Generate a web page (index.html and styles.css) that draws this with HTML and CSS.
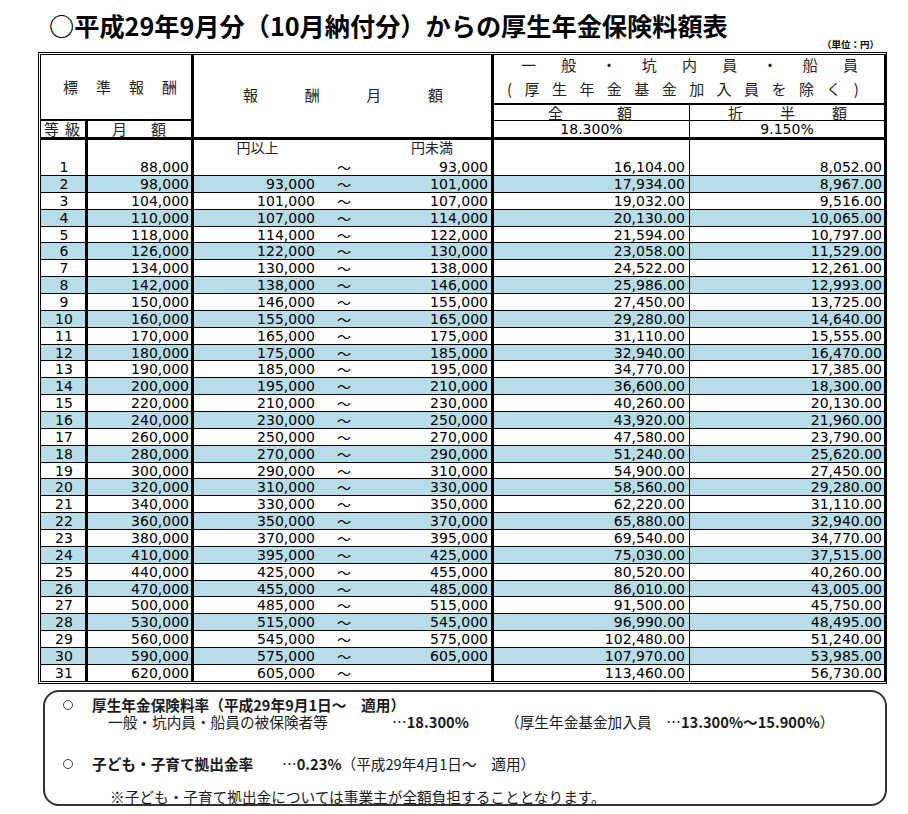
FILE: index.html
```html
<!DOCTYPE html>
<html lang="ja">
<head>
<meta charset="utf-8">
<title>厚生年金保険料額表</title>
<link rel="stylesheet" href="styles.css">
</head>
<body>
<div class="page">
  <h1 class="title">○平成29年9月分（10月納付分）からの厚生年金保険料額表</h1>
  <div class="unit">（単位：円）</div>
  <div class="table">
    <div class="head">
      <div class="hc h-std"><div class="spread sp-std"><span>標</span><span>準</span><span>報</span><span>酬</span></div></div>
      <div class="hc h-grade"><div class="spread sp-grade"><span>等</span><span>級</span></div></div>
      <div class="hc h-month"><div class="spread sp-month"><span>月</span><span>額</span></div></div>
      <div class="hc h-pay"><div class="spread sp-pay"><span>報</span><span>酬</span><span>月</span><span>額</span></div></div>
      <div class="h-gen">
        <div class="gen1"><div class="spread sp-gen1"><span>一</span><span>般</span><span>・</span><span>坑</span><span>内</span><span>員</span><span>・</span><span>船</span><span>員</span></div></div>
        <div class="gen2"><div class="spread sp-gen2"><span>(</span><span>厚</span><span>生</span><span>年</span><span>金</span><span>基</span><span>金</span><span>加</span><span>入</span><span>員</span><span>を</span><span>除</span><span>く</span><span>)</span></div></div>
      </div>
      <div class="hc h-full"><div class="spread sp-full"><span>全</span><span>額</span></div></div>
      <div class="hc h-half"><div class="spread sp-half"><span>折</span><span>半</span><span>額</span></div></div>
      <div class="hc h-rate1">18.300%</div>
      <div class="hc h-rate2">9.150%</div>
    </div>
    <div class="body">
      <div class="row first"><div class="c g">1</div><div class="c m">88,000</div><div class="c f"><span class="lbl">円以上</span><span></span></div><div class="c t">～</div><div class="c u"><span class="lbl">円未満</span><span>93,000</span></div><div class="c a">16,104.00</div><div class="c b">8,052.00</div></div>
      <div class="row blue"><div class="c g">2</div><div class="c m">98,000</div><div class="c f">93,000</div><div class="c t">～</div><div class="c u">101,000</div><div class="c a">17,934.00</div><div class="c b">8,967.00</div></div>
      <div class="row"><div class="c g">3</div><div class="c m">104,000</div><div class="c f">101,000</div><div class="c t">～</div><div class="c u">107,000</div><div class="c a">19,032.00</div><div class="c b">9,516.00</div></div>
      <div class="row blue"><div class="c g">4</div><div class="c m">110,000</div><div class="c f">107,000</div><div class="c t">～</div><div class="c u">114,000</div><div class="c a">20,130.00</div><div class="c b">10,065.00</div></div>
      <div class="row"><div class="c g">5</div><div class="c m">118,000</div><div class="c f">114,000</div><div class="c t">～</div><div class="c u">122,000</div><div class="c a">21,594.00</div><div class="c b">10,797.00</div></div>
      <div class="row blue"><div class="c g">6</div><div class="c m">126,000</div><div class="c f">122,000</div><div class="c t">～</div><div class="c u">130,000</div><div class="c a">23,058.00</div><div class="c b">11,529.00</div></div>
      <div class="row"><div class="c g">7</div><div class="c m">134,000</div><div class="c f">130,000</div><div class="c t">～</div><div class="c u">138,000</div><div class="c a">24,522.00</div><div class="c b">12,261.00</div></div>
      <div class="row blue"><div class="c g">8</div><div class="c m">142,000</div><div class="c f">138,000</div><div class="c t">～</div><div class="c u">146,000</div><div class="c a">25,986.00</div><div class="c b">12,993.00</div></div>
      <div class="row"><div class="c g">9</div><div class="c m">150,000</div><div class="c f">146,000</div><div class="c t">～</div><div class="c u">155,000</div><div class="c a">27,450.00</div><div class="c b">13,725.00</div></div>
      <div class="row blue"><div class="c g">10</div><div class="c m">160,000</div><div class="c f">155,000</div><div class="c t">～</div><div class="c u">165,000</div><div class="c a">29,280.00</div><div class="c b">14,640.00</div></div>
      <div class="row"><div class="c g">11</div><div class="c m">170,000</div><div class="c f">165,000</div><div class="c t">～</div><div class="c u">175,000</div><div class="c a">31,110.00</div><div class="c b">15,555.00</div></div>
      <div class="row blue"><div class="c g">12</div><div class="c m">180,000</div><div class="c f">175,000</div><div class="c t">～</div><div class="c u">185,000</div><div class="c a">32,940.00</div><div class="c b">16,470.00</div></div>
      <div class="row"><div class="c g">13</div><div class="c m">190,000</div><div class="c f">185,000</div><div class="c t">～</div><div class="c u">195,000</div><div class="c a">34,770.00</div><div class="c b">17,385.00</div></div>
      <div class="row blue"><div class="c g">14</div><div class="c m">200,000</div><div class="c f">195,000</div><div class="c t">～</div><div class="c u">210,000</div><div class="c a">36,600.00</div><div class="c b">18,300.00</div></div>
      <div class="row"><div class="c g">15</div><div class="c m">220,000</div><div class="c f">210,000</div><div class="c t">～</div><div class="c u">230,000</div><div class="c a">40,260.00</div><div class="c b">20,130.00</div></div>
      <div class="row blue"><div class="c g">16</div><div class="c m">240,000</div><div class="c f">230,000</div><div class="c t">～</div><div class="c u">250,000</div><div class="c a">43,920.00</div><div class="c b">21,960.00</div></div>
      <div class="row"><div class="c g">17</div><div class="c m">260,000</div><div class="c f">250,000</div><div class="c t">～</div><div class="c u">270,000</div><div class="c a">47,580.00</div><div class="c b">23,790.00</div></div>
      <div class="row blue"><div class="c g">18</div><div class="c m">280,000</div><div class="c f">270,000</div><div class="c t">～</div><div class="c u">290,000</div><div class="c a">51,240.00</div><div class="c b">25,620.00</div></div>
      <div class="row"><div class="c g">19</div><div class="c m">300,000</div><div class="c f">290,000</div><div class="c t">～</div><div class="c u">310,000</div><div class="c a">54,900.00</div><div class="c b">27,450.00</div></div>
      <div class="row blue"><div class="c g">20</div><div class="c m">320,000</div><div class="c f">310,000</div><div class="c t">～</div><div class="c u">330,000</div><div class="c a">58,560.00</div><div class="c b">29,280.00</div></div>
      <div class="row"><div class="c g">21</div><div class="c m">340,000</div><div class="c f">330,000</div><div class="c t">～</div><div class="c u">350,000</div><div class="c a">62,220.00</div><div class="c b">31,110.00</div></div>
      <div class="row blue"><div class="c g">22</div><div class="c m">360,000</div><div class="c f">350,000</div><div class="c t">～</div><div class="c u">370,000</div><div class="c a">65,880.00</div><div class="c b">32,940.00</div></div>
      <div class="row"><div class="c g">23</div><div class="c m">380,000</div><div class="c f">370,000</div><div class="c t">～</div><div class="c u">395,000</div><div class="c a">69,540.00</div><div class="c b">34,770.00</div></div>
      <div class="row blue"><div class="c g">24</div><div class="c m">410,000</div><div class="c f">395,000</div><div class="c t">～</div><div class="c u">425,000</div><div class="c a">75,030.00</div><div class="c b">37,515.00</div></div>
      <div class="row"><div class="c g">25</div><div class="c m">440,000</div><div class="c f">425,000</div><div class="c t">～</div><div class="c u">455,000</div><div class="c a">80,520.00</div><div class="c b">40,260.00</div></div>
      <div class="row blue"><div class="c g">26</div><div class="c m">470,000</div><div class="c f">455,000</div><div class="c t">～</div><div class="c u">485,000</div><div class="c a">86,010.00</div><div class="c b">43,005.00</div></div>
      <div class="row"><div class="c g">27</div><div class="c m">500,000</div><div class="c f">485,000</div><div class="c t">～</div><div class="c u">515,000</div><div class="c a">91,500.00</div><div class="c b">45,750.00</div></div>
      <div class="row blue"><div class="c g">28</div><div class="c m">530,000</div><div class="c f">515,000</div><div class="c t">～</div><div class="c u">545,000</div><div class="c a">96,990.00</div><div class="c b">48,495.00</div></div>
      <div class="row"><div class="c g">29</div><div class="c m">560,000</div><div class="c f">545,000</div><div class="c t">～</div><div class="c u">575,000</div><div class="c a">102,480.00</div><div class="c b">51,240.00</div></div>
      <div class="row blue"><div class="c g">30</div><div class="c m">590,000</div><div class="c f">575,000</div><div class="c t">～</div><div class="c u">605,000</div><div class="c a">107,970.00</div><div class="c b">53,985.00</div></div>
      <div class="row"><div class="c g">31</div><div class="c m">620,000</div><div class="c f">605,000</div><div class="c t">～</div><div class="c u"></div><div class="c a">113,460.00</div><div class="c b">56,730.00</div></div>
    </div>
  </div>
  <div class="note">
    <div class="nl nl1"><span class="circle"></span><b class="w-l1">厚生年金保険料率（平成29年9月1日～　適用）</b></div>
    <div class="nl nl2"><span class="w-a">一般・坑内員・船員の被保険者等</span><span class="w-b">…<b>18.300%</b></span><span>（厚生年金基金加入員　…<b>13.300%～15.900%</b>）</span></div>
    <div class="nl nl3"><span class="circle"></span><b class="w-c">子ども・子育て拠出金率</b><span>…<b>0.23%</b>（平成29年4月1日～　適用）</span></div>
    <div class="nl nl4"><span>※子ども・子育て拠出金については事業主が全額負担することとなります。</span></div>
  </div>
</div>
</body>
</html>
```

FILE: styles.css
```css
* {
  box-sizing: border-box;
  margin: 0;
  padding: 0;
}

body {
  margin: 0;
  background: #ffffff;
  color: #000000;
  font-family: "DejaVu Sans", "Noto Sans CJK JP", sans-serif;
}

.page {
  width: 849px;
  margin-left: 38px;
}

.title {
  font-family: "Noto Sans CJK JP", sans-serif;
  font-weight: 700;
  font-size: 25.2px;
  line-height: 30px;
  margin-top: 10px;
  margin-left: 11px;
  white-space: nowrap;
}

.unit {
  font-family: "Noto Sans CJK JP", sans-serif;
  font-weight: 700;
  font-size: 9.5px;
  line-height: 8px;
  height: 8px;
  text-align: right;
  padding-right: 8px;
  margin-bottom: 4px;
}

.table {
  border-top: 3px double #000;
  border-left: 3px double #000;
  border-bottom: 3px double #000;
  border-right: 3px solid #000;
}

/* ---------- header ---------- */
.head {
  display: grid;
  grid-template-columns: 47px 106px 300px 196px 194px;
  grid-template-rows: 50px 16px 19px;
  font-family: "Noto Sans CJK JP", sans-serif;
  font-size: 15px;
  line-height: 16px;
  color: #222;
}

.hc {
  display: flex;
  align-items: center;
}

.spread {
  display: flex;
  justify-content: space-between;
}

.h-std {
  grid-column: 1 / 3;
  grid-row: 1 / 3;
  border-right: 3px solid #000;
  border-bottom: 2px solid #000;
}
.sp-std { width: 114px; margin-left: 22px; }

.h-grade {
  grid-column: 1;
  grid-row: 3;
  border-right: 3px solid #000;
  border-bottom: 3px solid #000;
}
.sp-grade { width: 36px; margin-left: 3px; }

.h-month {
  grid-column: 2;
  grid-row: 3;
  border-right: 3px solid #000;
  border-bottom: 3px solid #000;
}
.sp-month { width: 54px; margin-left: 24px; }

.h-pay {
  grid-column: 3;
  grid-row: 1 / 4;
  border-right: 3px solid #000;
  border-bottom: 3px solid #000;
  padding-bottom: 3px;
}
.sp-pay { width: 200px; margin-left: 49px; }

.h-gen {
  grid-column: 4 / 6;
  grid-row: 1;
  border-bottom: 2px solid #000;
}
.gen1 {
  height: 20px;
  display: flex;
  align-items: center;
}
.gen2 {
  height: 28px;
  display: flex;
  align-items: center;
}
.sp-gen1 { width: 337px; margin-left: 27px; }
.sp-gen2 { width: 352px; margin-left: 13px; }

.h-full {
  grid-column: 4;
  grid-row: 2;
  border-right: 1px solid #000;
  border-bottom: 1px solid #000;
}
.sp-full { width: 84px; margin-left: 54px; }

.h-half {
  grid-column: 5;
  grid-row: 2;
  border-bottom: 1px solid #000;
}
.sp-half { width: 119px; margin-left: 38px; }

.h-rate1,
.h-rate2 {
  font-family: "DejaVu Sans", sans-serif;
  font-size: 14px;
  color: #000;
  justify-content: center;
  border-bottom: 3px solid #000;
}
.h-rate1 {
  grid-column: 4;
  grid-row: 3;
  border-right: 1px solid #000;
}
.h-rate2 {
  grid-column: 5;
  grid-row: 3;
}

/* ---------- body ---------- */
.body {
  display: flex;
  flex-direction: column;
  height: 541px;
  font-size: 14px;
}

.row {
  display: grid;
  grid-template-columns: 47px 106px 124px 52px 124px 196px 194px;
  flex: 1 1 0;
  min-height: 0;
  border-bottom: 1px solid #000;
}
.row:last-child { border-bottom: 0; }
.row.first { flex: 0 0 36px; }
.row.blue { background: #b7dee8; }

.c {
  display: flex;
  align-items: center;
  justify-content: flex-end;
  line-height: 16px;
  white-space: nowrap;
}
.g {
  justify-content: center;
  padding-left: 2px;
  border-right: 3px solid #000;
}
.m {
  padding-right: 2px;
  border-right: 3px solid #000;
}
.f { padding-right: 3px; }
.t {
  justify-content: center;
  font-family: "Noto Sans CJK JP", sans-serif;
}
.u {
  padding-right: 3px;
  border-right: 3px solid #000;
}
.a {
  padding-right: 4px;
  border-right: 1px solid #000;
}
.b { padding-right: 2px; }

.first .c { align-items: flex-end; }
.first .f,
.first .u {
  flex-direction: column;
  justify-content: space-between;
  align-items: flex-end;
}
.lbl {
  align-self: center;
  margin-left: 6px;
  font-family: "Noto Sans CJK JP", sans-serif;
  font-size: 14px;
  line-height: 14px;
  color: #222;
}

/* ---------- note box ---------- */
.note {
  margin-top: 6px;
  margin-left: 5px;
  width: 844px;
  border: 2px solid #333;
  border-radius: 16px;
  padding: 4px 0 0 0;
  height: 116px;
  font-family: "Noto Sans CJK JP", sans-serif;
  font-size: 11pt;
  line-height: 17px;
  color: #1a1a1a;
}

.nl {
  display: flex;
  align-items: center;
  height: 17px;
  white-space: nowrap;
}
.nl1 { padding-left: 18px; }
.nl2 { padding-left: 63px; }
.nl3 { padding-left: 18px; margin-top: 25px; }
.nl4 { padding-left: 65px; margin-top: 16px; }

.circle {
  display: inline-block;
  width: 10px;
  height: 10px;
  border: 1px solid #444;
  border-radius: 50%;
  margin-right: 19px;
  flex: none;
}

.w-a { width: 284px; }
.w-b { width: 113px; }
.w-c { width: 190px; }
```
